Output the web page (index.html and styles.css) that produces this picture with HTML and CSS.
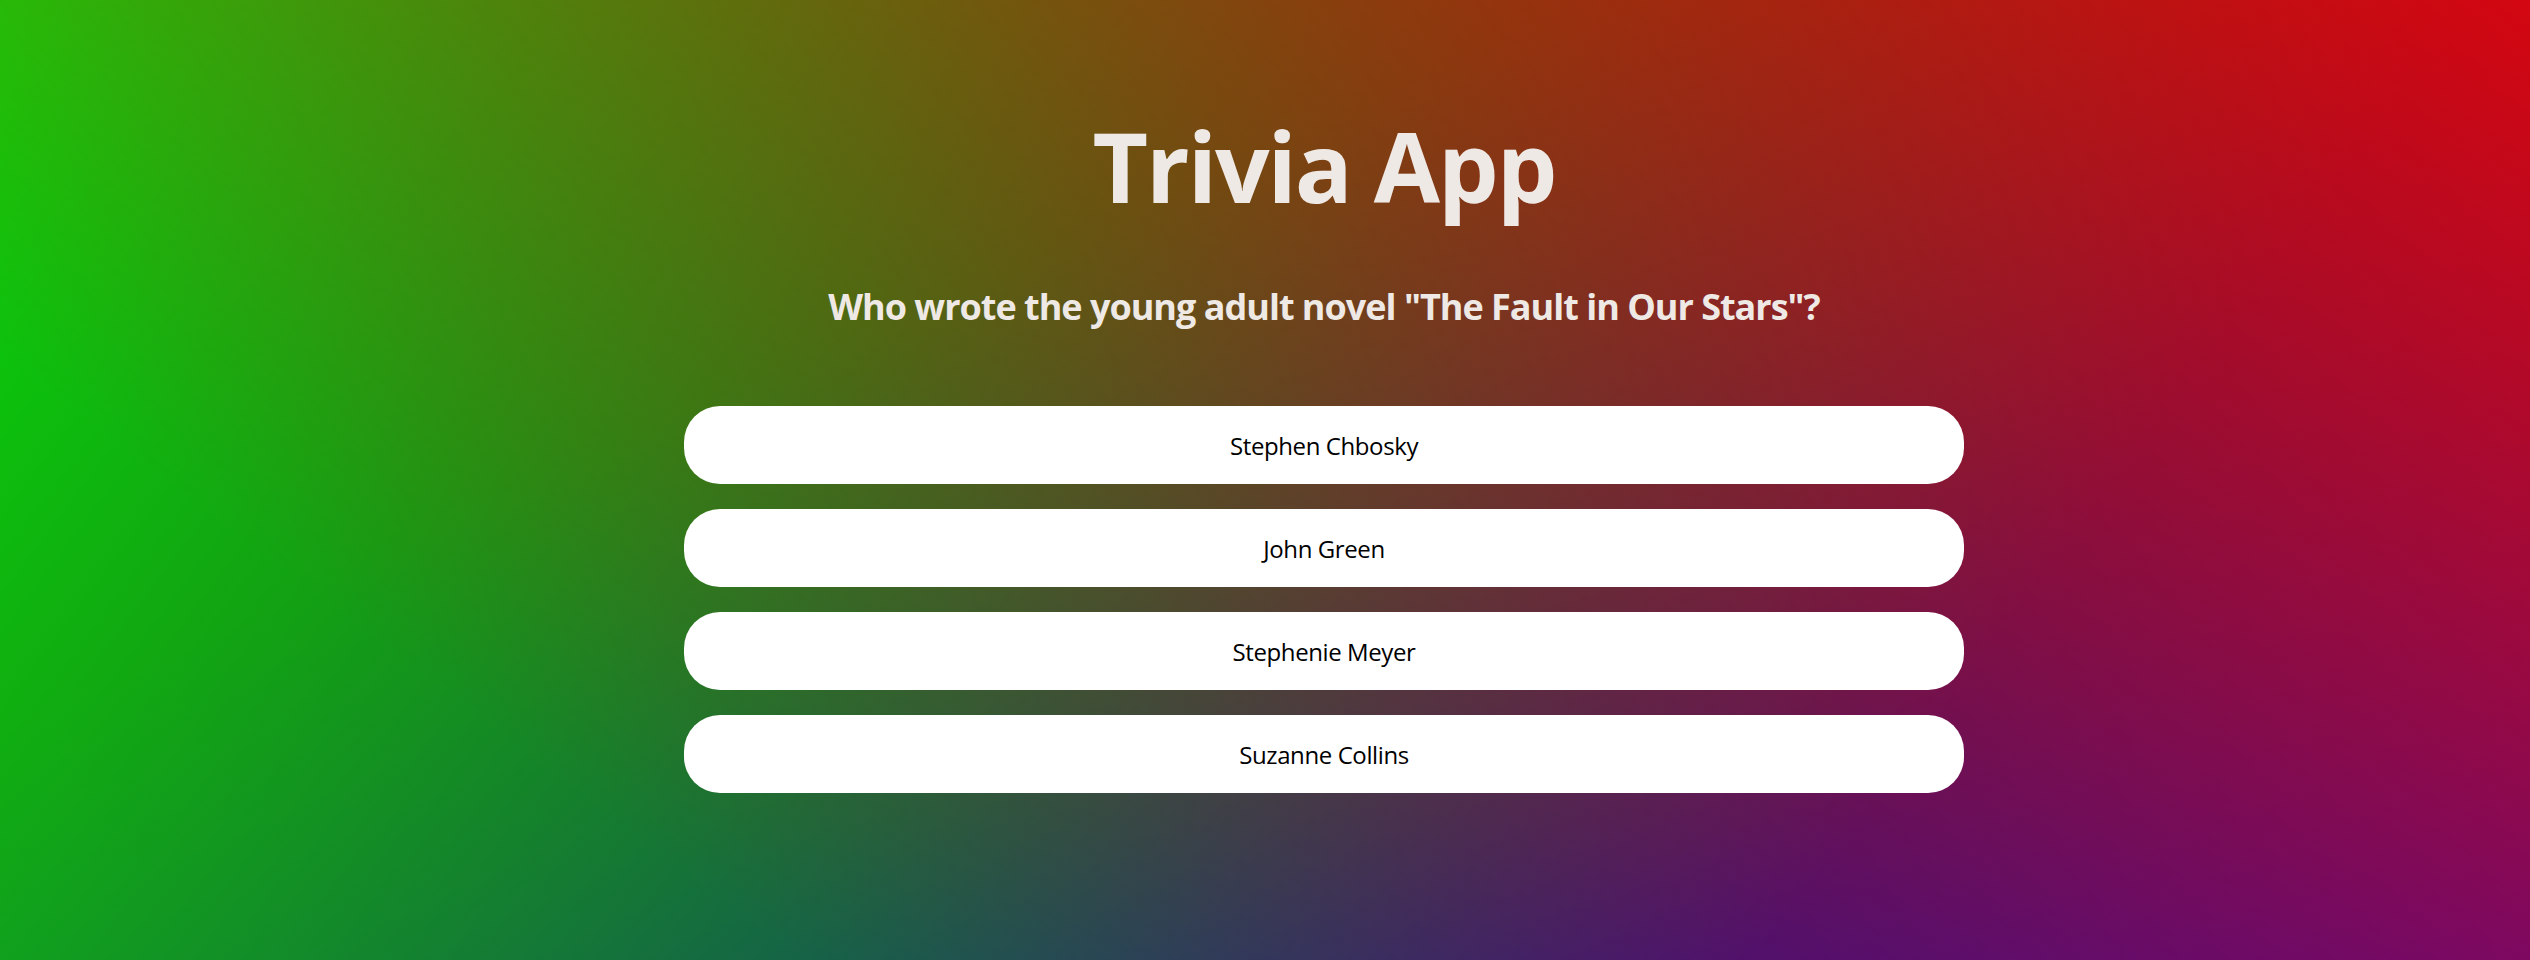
FILE: index.html
```html
<!DOCTYPE html>
<html lang="en">
<head>
<meta charset="utf-8">
<title>Trivia App</title>
<link rel="stylesheet" href="styles.css">
</head>
<body>
<main class="app">
  <h1 class="title">Trivia App</h1>
  <h2 class="question">Who wrote the young adult novel "The Fault in Our Stars"?</h2>
  <div class="answers">
    <button class="answer">Stephen Chbosky</button>
    <button class="answer">John Green</button>
    <button class="answer">Stephenie Meyer</button>
    <button class="answer">Suzanne Collins</button>
  </div>
</main>
</body>
</html>
```

FILE: styles.css
```css
html {
  margin: 0;
  padding: 0;
  min-height: 100%;
  background-color: #2a2a2a;
  background-image:
    linear-gradient(217deg, rgba(255, 0, 0, 0.8), rgba(255, 0, 0, 0) 70.71%),
    linear-gradient(127deg, rgba(0, 255, 0, 0.8), rgba(0, 255, 0, 0) 70.71%),
    linear-gradient(336deg, rgba(0, 0, 255, 0.8), rgba(0, 0, 255, 0) 70.71%);
  background-size: 100% 1300px;
  background-repeat: no-repeat;
}

body {
  margin: 0;
  padding: 0;
  min-height: 100vh;
  font-family: "Open Sans", "Noto Sans", sans-serif;
}

.app {
  box-sizing: border-box;
  display: flex;
  flex-direction: column;
  align-items: center;
  padding: 108px 0 0 118px;
}

.title {
  margin: 0;
  font-size: 96px;
  line-height: 1.2;
  font-weight: 700;
  color: #efe9e5;
  letter-spacing: -2px;
}

.question {
  margin: 62px 0 0;
  font-size: 36px;
  line-height: 1.2;
  font-weight: 700;
  color: #efe9e5;
  letter-spacing: -1px;
}

.answers {
  margin-top: 78px;
  display: flex;
  flex-direction: column;
  gap: 25px;
  width: 1280px;
}

.answer {
  height: 78px;
  border: none;
  border-radius: 36px;
  background: #fff;
  color: #000;
  font-family: "Open Sans", "Noto Sans", sans-serif;
  font-size: 24px;
  font-weight: 400;
  letter-spacing: -0.4px;
  cursor: pointer;
}
```
